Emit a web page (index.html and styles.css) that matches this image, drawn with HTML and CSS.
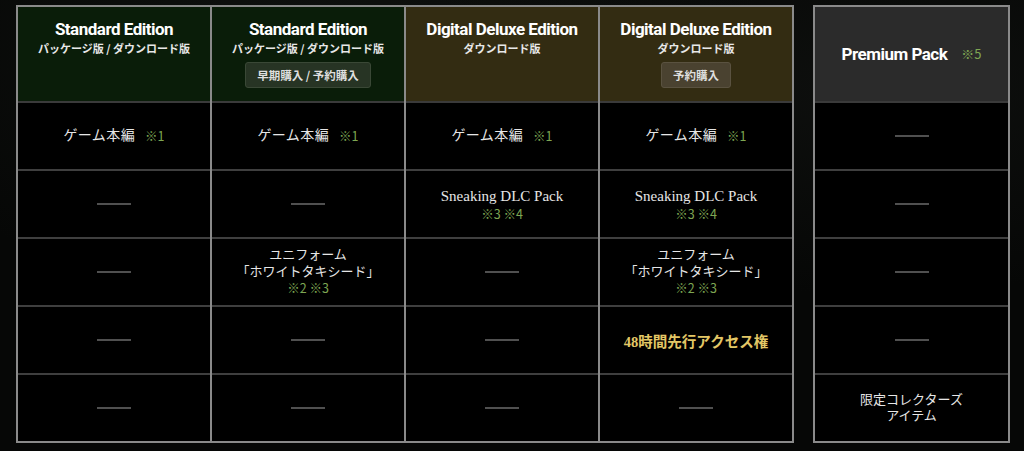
FILE: index.html
```html
<!DOCTYPE html>
<html lang="ja">
<head>
<meta charset="utf-8">
<link rel="stylesheet" href="styles.css">
</head>
<body>
<div class="page">
  <div class="table main">
    <div class="col">
      <div class="head green">
        <div class="title">Standard Edition</div>
        <div class="sub">パッケージ版 / ダウンロード版</div>
      </div>
      <div class="cell"><span class="txt lg">ゲーム本編</span><span class="note gap">※1</span></div>
      <div class="cell"><span class="dash"></span></div>
      <div class="cell"><span class="dash"></span></div>
      <div class="cell"><span class="dash"></span></div>
      <div class="cell"><span class="dash"></span></div>
    </div>
    <div class="col">
      <div class="head green">
        <div class="title">Standard Edition</div>
        <div class="sub">パッケージ版 / ダウンロード版</div>
        <div class="badge badge-green">早期購入 / 予約購入</div>
      </div>
      <div class="cell"><span class="txt lg">ゲーム本編</span><span class="note gap">※1</span></div>
      <div class="cell"><span class="dash"></span></div>
      <div class="cell stack"><span class="txt">ユニフォーム</span><span class="txt">「ホワイトタキシード」</span><span class="note">※2 ※3</span></div>
      <div class="cell"><span class="dash"></span></div>
      <div class="cell"><span class="dash"></span></div>
    </div>
    <div class="col">
      <div class="head olive">
        <div class="title">Digital Deluxe Edition</div>
        <div class="sub">ダウンロード版</div>
      </div>
      <div class="cell"><span class="txt lg">ゲーム本編</span><span class="note gap">※1</span></div>
      <div class="cell stack"><span class="txt latin">Sneaking DLC Pack</span><span class="note">※3 ※4</span></div>
      <div class="cell"><span class="dash"></span></div>
      <div class="cell"><span class="dash"></span></div>
      <div class="cell"><span class="dash"></span></div>
    </div>
    <div class="col">
      <div class="head olive">
        <div class="title">Digital Deluxe Edition</div>
        <div class="sub">ダウンロード版</div>
        <div class="badge badge-olive">予約購入</div>
      </div>
      <div class="cell"><span class="txt lg">ゲーム本編</span><span class="note gap">※1</span></div>
      <div class="cell stack"><span class="txt latin">Sneaking DLC Pack</span><span class="note">※3 ※4</span></div>
      <div class="cell stack"><span class="txt">ユニフォーム</span><span class="txt">「ホワイトタキシード」</span><span class="note">※2 ※3</span></div>
      <div class="cell"><span class="gold">48時間先行アクセス権</span></div>
      <div class="cell"><span class="dash"></span></div>
    </div>
  </div>
  <div class="table premium">
    <div class="col">
      <div class="head grey center">
        <div class="title">Premium Pack<span class="note big">※5</span></div>
      </div>
      <div class="cell"><span class="dash"></span></div>
      <div class="cell"><span class="dash"></span></div>
      <div class="cell"><span class="dash"></span></div>
      <div class="cell"><span class="dash"></span></div>
      <div class="cell stack"><span class="txt">限定コレクターズ</span><span class="txt">アイテム</span></div>
    </div>
  </div>
</div>
</body>
</html>
```

FILE: styles.css
```css
html, body {
  margin: 0;
  padding: 0;
}
body {
  width: 1024px;
  height: 451px;
  overflow: hidden;
  background:
    radial-gradient(ellipse at 30% 10%, rgba(36,42,36,0.3), transparent 45%),
    radial-gradient(ellipse at 85% 20%, rgba(36,40,36,0.25), transparent 40%),
    #060706;
  font-family: "Noto Sans CJK JP", "Noto Sans", sans-serif;
  color: #e6e6e6;
}
.page {
  display: flex;
  align-items: flex-start;
  padding: 5px 0 0 16px;
  gap: 19px;
}
.table {
  display: flex;
  border: 2px solid #8a8a8a;
  background: #000;
}
.main { width: 774px; }
.premium { width: 193px; }
.col {
  flex: 1;
  display: flex;
  flex-direction: column;
}
.col + .col { border-left: 2px solid #8a8a8a; }
.head {
  height: 96px;
  box-sizing: border-box;
  border-bottom: 2px solid #3a3a3a;
  display: flex;
  flex-direction: column;
  align-items: center;
  padding-top: 12px;
}
.head.center {
  justify-content: center;
  padding-top: 0;
}
.green { background: #0a1d09; }
.olive { background: #332c12; }
.grey { background: #2b2b2b; }
.title {
  font-family: "Roboto", "Liberation Sans", sans-serif;
  font-weight: 700;
  font-size: 17px;
  line-height: 20px;
  color: #fff;
  letter-spacing: -0.5px;
  display: flex;
  align-items: center;
}
.sub {
  margin-top: 2px;
  font-size: 11px;
  line-height: 14px;
  font-weight: 700;
  color: #e8e8e8;
}
.badge {
  margin-top: 7px;
  height: 26px;
  box-sizing: border-box;
  padding: 0 11px;
  display: flex;
  align-items: center;
  font-size: 11.5px;
  font-weight: 700;
  color: #dedede;
  border-radius: 3px;
}
.badge-green { background: #273424; border: 1px solid #3a4836; }
.badge-olive { background: #4a4230; border: 1px solid #5a5240; }
.cell {
  height: 66px;
  display: flex;
  align-items: center;
  justify-content: center;
  text-align: center;
}
.cell + .cell { border-top: 2px solid #3f3f3f; }
.stack {
  flex-direction: column;
}
.txt {
  font-family: "Liberation Serif", "Noto Sans CJK JP", serif;
  font-size: 13px;
  line-height: 16.5px;
  color: #e6e6e6;
}
.txt.lg {
  font-size: 14px;
  letter-spacing: 0.4px;
}
.latin {
  font-size: 15px;
  line-height: 20px;
}
.note {
  font-size: 12.5px;
  line-height: 16.5px;
  color: #7ea653;
  letter-spacing: 0;
}
.gap { margin-left: 10px; }
.big {
  font-family: "Noto Sans CJK JP", sans-serif;
  font-weight: 400;
  font-size: 13px;
  margin-left: 14px;
}
.gold {
  font-family: "Liberation Serif", "Noto Sans CJK JP", serif;
  font-weight: 700;
  font-size: 14.5px;
  color: #e3c766;
}
.dash {
  display: block;
  width: 34px;
  height: 2px;
  background: #505050;
}
```
